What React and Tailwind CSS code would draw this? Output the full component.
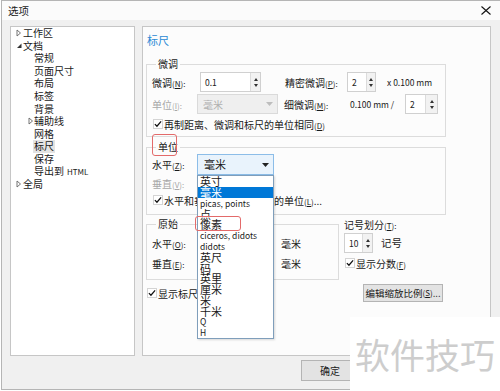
const tree = [
  { t: '工作区', lvl: 0, arrow: 'closed' },
  { t: '文档', lvl: 0, arrow: 'open' },
  { t: '常规', lvl: 1 },
  { t: '页面尺寸', lvl: 1 },
  { t: '布局', lvl: 1 },
  { t: '标签', lvl: 1 },
  { t: '背景', lvl: 1 },
  { t: '辅助线', lvl: 1, arrow: 'closed' },
  { t: '网格', lvl: 1 },
  { t: '标尺', lvl: 1, sel: true },
  { t: '保存', lvl: 1 },
  { t: '导出到', extra: 'HTML', lvl: 1 },
  { t: '全局', lvl: 0, arrow: 'closed' },
];

const units = [
  { t: '英寸' },
  { t: '毫米', sel: true },
  { t: 'picas, points', latin: true },
  { t: '点' },
  { t: '像素' },
  { t: 'ciceros, didots', latin: true },
  { t: 'didots', latin: true },
  { t: '英尺' },
  { t: '码' },
  { t: '英里' },
  { t: '厘米' },
  { t: '米' },
  { t: '千米' },
  { t: 'Q', latin: true },
  { t: 'H', latin: true },
];

function Arrow({ open }) {
  if (open) {
    return (
      <svg width="6" height="7" viewBox="0 0 6 7">
        <path d="M5.5 1.5 L5.5 6 L1 6 Z" fill="#333" />
      </svg>
    );
  }
  return (
    <svg width="6" height="8" viewBox="0 0 6 8">
      <path d="M1 1 L4.5 4 L1 7 Z" fill="none" stroke="#666" strokeWidth="0.9" />
    </svg>
  );
}

function Hot({ k, colon = true }) {
  return (
    <span className="text-[8px]">
      (<span className="underline">{k}</span>){colon ? ':' : ''}
    </span>
  );
}

function Check() {
  return (
    <span className="flex items-center justify-center w-[10px] h-[10px] border border-[#d4d4d4] bg-white">
      <svg width="9" height="8" viewBox="0 0 9 8">
        <path d="M1 4.2 L3.3 6.5 L8 1" fill="none" stroke="#111" strokeWidth="1.4" />
      </svg>
    </span>
  );
}

function Spin({ value, box, btn }) {
  return (
    <div className="flex h-[20px] border border-[#d0d0d0] bg-white">
      <div className={`${box} flex items-center pl-[4px] text-[8.5px] text-[#222]`}>{value}</div>
      <div className={`${btn} flex flex-col items-center justify-center gap-[3px] bg-[#f2f2f2] border-l border-[#dcdcdc]`}>
        <svg width="4" height="3" viewBox="0 0 4 3">
          <path d="M0 3 L2 0 L4 3 Z" fill="#333" />
        </svg>
        <svg width="4" height="3" viewBox="0 0 4 3">
          <path d="M0 0 L4 0 L2 3 Z" fill="#333" />
        </svg>
      </div>
    </div>
  );
}

function Caret({ color }) {
  return (
    <svg width="7" height="4" viewBox="0 0 7 4">
      <path d="M0 0 L7 0 L3.5 4 Z" fill={color} />
    </svg>
  );
}

export default function App() {
  return (
    <div className="relative w-[500px] h-[391px] overflow-hidden bg-white pl-[1px] font-['Noto_Sans_CJK_SC','Noto_Sans',sans-serif] text-[10px] text-[#1a1a1a]">
      <div className="w-[499px] h-[390px] border-l border-t border-b border-[#b5b5b5] bg-[#f0f0f0]">
        {/* title bar */}
        <div className="flex items-center justify-between h-[19px] bg-[#fbfbfb] pl-[6px] pr-[9px]">
          <span className="text-[10.5px] leading-[19px]">选项</span>
          <svg width="10" height="9" viewBox="0 0 10 9">
            <path d="M0.5 0.5 L9.5 8.5 M9.5 0.5 L0.5 8.5" stroke="#111" strokeWidth="1.1" />
          </svg>
        </div>

        {/* body */}
        <div className="flex pt-[6px] pl-[8px]">
          {/* tree */}
          <div className="w-[125px] h-[330px] border border-[#c6c6c6] bg-white">
            {tree.map((r) => (
              <div
                key={r.t}
                className={`flex items-center h-[12.6px] leading-[12.6px] ${
                  r.lvl === 0 ? 'pl-[5px]' : r.arrow ? 'pl-[17px]' : 'pl-[23px]'
                }`}
              >
                {r.arrow && (
                  <span className={`flex items-center ${r.lvl === 0 ? 'w-[7px]' : 'w-[6px]'}`}>
                    <Arrow open={r.arrow === 'open'} />
                  </span>
                )}
                <span className={r.sel ? 'bg-[#e3e3e3] px-[1px] -ml-[1px] h-[12.6px]' : ''}>
                  {r.t}
                  {r.extra && <span className="ml-[3px] text-[8px]">{r.extra}</span>}
                </span>
              </div>
            ))}
          </div>

          {/* page */}
          <div className="relative ml-[7px] w-[349px] h-[330px] border border-[#c6c6c6] bg-[#fcfcfc]">
            <div className="mt-[6px] ml-[4px] h-[14px] leading-[14px] text-[11px] text-[#2b8ad4]">标尺</div>

            <fieldset className="mt-[10px] ml-[3px] w-[300px] border border-[#dcdcdc] pl-[5px] pt-[1px] pb-[3px]">
              <legend className="ml-[4px] px-[2px] h-[14px] leading-[14px]">微调</legend>
              <div className="flex items-center h-[20px]">
                <span className="w-[48px]">微调<Hot k="N" /></span>
                <Spin value="0.1" box="w-[49px]" btn="w-[10px]" />
                <span className="ml-[24px] w-[62px]">精密微调<Hot k="P" /></span>
                <Spin value="2" box="w-[18px]" btn="w-[9px]" />
                <span className="ml-[11px] text-[8.5px]">x 0.100 mm</span>
              </div>
              <div className="flex items-center h-[20px] mt-[2px]">
                <span className="w-[45px] text-[#a8a8a8]">单位<Hot k="I" /></span>
                <div className="flex items-center justify-between w-[81px] h-[20px] border border-[#dadada] bg-[#efefef] pl-[5px] pr-[4px] text-[#b0b0b0]">
                  <span>毫米</span>
                  <Caret color="#bdbdbd" />
                </div>
                <span className="ml-[6px] w-[66px]">细微调<Hot k="M" /></span>
                <span className="w-[55px] text-[8.5px]">0.100 mm /</span>
                <Spin value="2" box="w-[19px]" btn="w-[12px]" />
              </div>
              <div className="flex items-center h-[18px] mt-[1px]">
                <span className="ml-[1px]"><Check /></span>
                <span className="ml-[1px]">再制距离、微调和标尺的单位相同<Hot k="D" colon={false} /></span>
              </div>
            </fieldset>

            <fieldset className="mt-[3px] ml-[3px] w-[300px] border border-[#dcdcdc] pl-[5px] pb-[5px]">
              <legend className="ml-[4px] px-[2px] h-[14px] leading-[14px]">单位</legend>
              <div className="flex items-center h-[21px]">
                <span className="w-[45px]">水平<Hot k="Z" /></span>
                <div className="flex items-center justify-between w-[77px] h-[21px] border border-[#8cbde8] bg-[#e9f3fc] pl-[6px] pr-[4px] text-[11px]">
                  <span>毫米</span>
                  <Caret color="#222" />
                </div>
              </div>
              <div className="flex items-center h-[16px]">
                <span className="text-[#a8a8a8]">垂直<Hot k="V" /></span>
              </div>
              <div className="flex items-center h-[18px]">
                <span className="ml-[1px]"><Check /></span>
                <span className="ml-[1px] whitespace-nowrap">水平和垂直标尺使用相同的单位<Hot k="L" colon={false} />...</span>
              </div>
            </fieldset>

            <div className="flex items-start mt-[2px]">
              <div>
                <fieldset className="ml-[3px] w-[193px] border border-[#dcdcdc] pl-[5px] pb-[6px]">
                  <legend className="ml-[4px] px-[2px] h-[14px] leading-[14px]">原始</legend>
                  <div className="flex items-center h-[20px] mt-[2px]">
                    <span className="w-[129px]">水平<Hot k="O" /></span>
                    <span>毫米</span>
                  </div>
                  <div className="flex items-center h-[20px]">
                    <span className="w-[129px]">垂直<Hot k="E" /></span>
                    <span>毫米</span>
                  </div>
                </fieldset>
                <div className="flex items-center ml-[4px] mt-[6px] h-[14px]">
                  <Check />
                  <span className="ml-[1px] whitespace-nowrap">显示标尺<Hot k="R" colon={false} /></span>
                </div>
              </div>

              <div className="ml-[5px]">
                <div className="h-[16px] leading-[16px]">记号划分<Hot k="T" /></div>
                <div className="flex items-center h-[20px]">
                  <Spin value="10" box="w-[17px]" btn="w-[10px]" />
                  <span className="ml-[8px] text-[10.5px]">记号</span>
                </div>
                <div className="flex items-center h-[20px] ml-[1px]">
                  <Check />
                  <span className="ml-[1px]">显示分数<Hot k="F" colon={false} /></span>
                </div>
                <div className="flex items-center justify-center mt-[11px] ml-[19px] w-[80px] h-[18px] border border-[#b4b4b4] bg-[#e3e3e3] whitespace-nowrap text-[9.5px]">
                  编辑缩放比例<Hot k="S" colon={false} />...
                </div>
              </div>
            </div>

            {/* open combobox list */}
            <div className="absolute left-[54px] top-[148px] w-[77px] h-[164px] border border-[#7f9ebb] bg-white shadow-[1px_1px_2px_rgba(0,0,0,0.15)]">
              {units.map((u) => (
                <div
                  key={u.t}
                  className={`flex items-center h-[10.8px] pl-[2px] whitespace-nowrap ${
                    u.latin ? 'text-[8.5px]' : 'text-[11px]'
                  } ${u.sel ? 'bg-[#0078d7] text-white' : ''}`}
                >
                  {u.t}
                </div>
              ))}
            </div>

            {/* red annotations */}
            <div className="absolute left-[9px] top-[107px] w-[25px] h-[22px] rounded-[3px] border border-[#e36a6a]" />
            <div className="absolute left-[52px] top-[189px] w-[46px] h-[15px] rounded-[3px] border border-[#e36a6a]" />
          </div>
        </div>

        {/* footer */}
        <div className="flex mt-[4px] pl-[299px]">
          <div className="flex items-center justify-center w-[58px] h-[21px] border border-[#b4b4b4] bg-[#e3e3e3]">确定</div>
        </div>
      </div>

      {/* watermark */}
      <div className="absolute left-[350px] top-[317px] w-[150px] h-[74px] bg-white flex items-center justify-center">
        <span className="text-[35px] leading-[40px] text-[#cdcdcd]">软件技巧</span>
      </div>
    </div>
  );
}
